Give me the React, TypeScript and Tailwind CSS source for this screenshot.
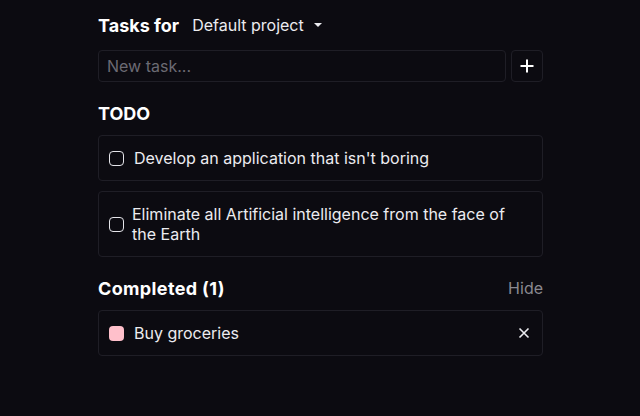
import React from "react";

export default function App() {
  return (
    <div className="min-h-[416px] w-[640px] bg-[#0c0b11] text-[#ececf0]" style={{ fontFamily: "Inter, 'Noto Sans', sans-serif" }}>
      <div className="ml-[98px] w-[445px] pt-[13px]">
        <div className="flex items-center h-[24px]">
          <span className="text-[18px] font-bold text-white">Tasks for</span>
          <span className="ml-[13px] text-[16px] text-[#ececf0]">Default project</span>
          <svg className="ml-[9px]" width="10" height="6" viewBox="0 0 10 6"><path d="M1 1 L5 5 L9 1 Z" fill="#ececf0" /></svg>
        </div>
        <div className="mt-[13px] flex gap-[5px]">
          <div className="h-[32px] flex-1 rounded-[4px] border border-[#1f1e26] flex items-center px-[8px] text-[16px] text-[#6b6a73]">New task...</div>
          <div className="h-[32px] w-[32px] rounded-[4px] border border-[#1f1e26] flex items-center justify-center">
            <svg width="16" height="16" viewBox="0 0 16 16"><path d="M8 1.5 V14.5 M1.5 8 H14.5" stroke="#fff" strokeWidth="2" /></svg>
          </div>
        </div>
        <div className="mt-[19px] text-[18px] font-bold text-white h-[24px] flex items-center">TODO</div>
        <div className="mt-[10px] flex flex-col gap-[10px]">
          <div className="h-[46px] rounded-[4px] border border-[#1f1e26] flex items-center pl-[10px] pr-[12px]">
            <div className="w-[15px] h-[15px] rounded-[4px] border-[1.5px] border-[#e5e5ea] shrink-0" />
            <span className="ml-[10px] text-[16px]">Develop an application that isn't boring</span>
          </div>
          <div className="h-[66px] rounded-[4px] border border-[#1f1e26] flex items-center pl-[10px] pr-[12px]">
            <div className="w-[15px] h-[15px] rounded-[4px] border-[1.5px] border-[#e5e5ea] shrink-0" />
            <span className="ml-[8px] text-[16px] leading-[20px]">Eliminate all Artificial intelligence from the face of the Earth</span>
          </div>
        </div>
        <div className="mt-[19px] flex items-center justify-between h-[24px]">
          <span className="text-[18px] font-bold text-white tracking-[0.02em]">Completed (1)</span>
          <span className="text-[16px] text-[#8a8990]">Hide</span>
        </div>
        <div className="mt-[10px] h-[46px] rounded-[4px] border border-[#1f1e26] flex items-center pl-[10px] pr-[12px]">
          <div className="w-[15px] h-[15px] rounded-[4px] bg-[#ffc0cb] shrink-0" />
          <span className="ml-[10px] text-[16px] flex-1">Buy groceries</span>
          <svg width="12" height="12" viewBox="0 0 12 12"><path d="M1.5 1.5 L10.5 10.5 M10.5 1.5 L1.5 10.5" stroke="#ececf0" strokeWidth="1.6" /></svg>
        </div>
      </div>
    </div>
  );
}
